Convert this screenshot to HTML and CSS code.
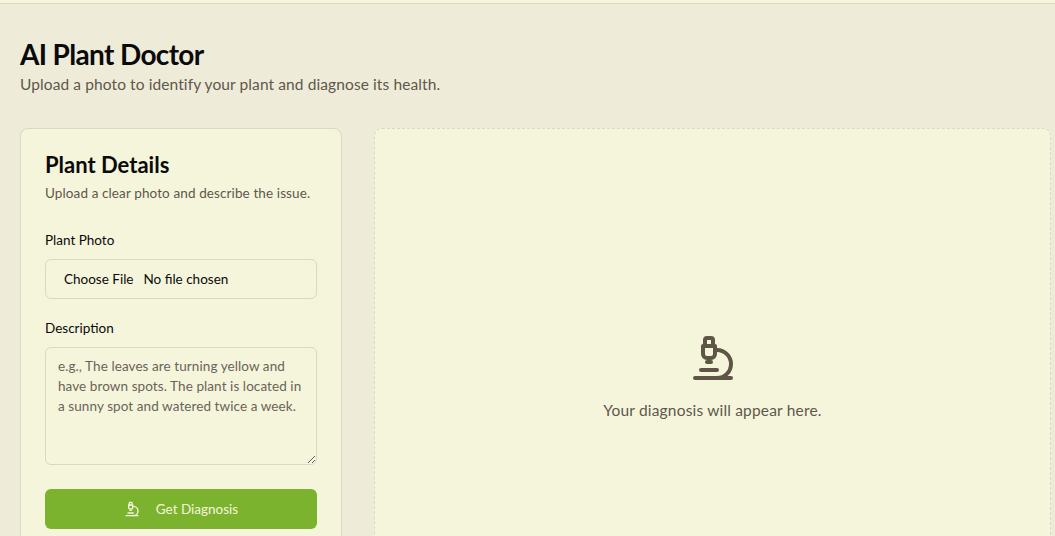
FILE: index.html
```html
<!DOCTYPE html>
<html lang="en">
<head>
<meta charset="utf-8">
<title>AI Plant Doctor</title>
<link rel="stylesheet" href="styles.css">
</head>
<body>
<div class="topbar"></div>
<main class="page">
  <header class="header">
    <h1 class="title">AI Plant Doctor</h1>
    <p class="subtitle">Upload a photo to identify your plant and diagnose its health.</p>
  </header>
  <div class="columns">
    <section class="card">
      <h2 class="card-title">Plant Details</h2>
      <p class="card-sub">Upload a clear photo and describe the issue.</p>
      <div class="field">
        <label class="label">Plant Photo</label>
        <div class="file-input"><span class="file-btn">Choose File</span><span>No file chosen</span></div>
      </div>
      <div class="field">
        <label class="label">Description</label>
        <textarea class="textarea" placeholder="e.g., The leaves are turning yellow and have brown spots. The plant is located in a sunny spot and watered twice a week."></textarea>
      </div>
      <button class="submit" type="button">
        <svg class="icon-small" viewBox="0 0 24 24" fill="none" stroke="currentColor" stroke-width="2" stroke-linecap="round" stroke-linejoin="round"><path d="M6 18h8"/><path d="M3 22h18"/><path d="M14 22a7 7 0 1 0 0-14h-1"/><path d="M9 14h2"/><path d="M9 12a2 2 0 0 1-2-2V6h6v4a2 2 0 0 1-2 2Z"/><path d="M12 6V3a1 1 0 0 0-1-1H9a1 1 0 0 0-1 1v3"/></svg>
        <span>Get Diagnosis</span>
      </button>
    </section>
    <section class="result">
      <svg class="icon-large" viewBox="0 0 24 24" fill="none" stroke="currentColor" stroke-width="2" stroke-linecap="round" stroke-linejoin="round"><path d="M6 18h8"/><path d="M3 22h18"/><path d="M14 22a7 7 0 1 0 0-14h-1"/><path d="M9 14h2"/><path d="M9 12a2 2 0 0 1-2-2V6h6v4a2 2 0 0 1-2 2Z"/><path d="M12 6V3a1 1 0 0 0-1-1H9a1 1 0 0 0-1 1v3"/></svg>
      <p class="result-text">Your diagnosis will appear here.</p>
    </section>
  </div>
</main>
</body>
</html>
```
FILE: styles.css
```css
* { box-sizing: border-box; }
html, body { margin: 0; height: 536px; overflow: hidden; }
body {
  background: #eeecd9;
  color: #0a0a0a;
  font-family: "Lato", "Noto Sans", sans-serif;
}
.topbar {
  height: 4px;
  background: #f5f5dc;
  border-bottom: 1px solid #dad8c0;
}
.page { padding: 32px 4px 0 20px; }
.header { margin-bottom: 32px; }
.title {
  margin: 0;
  font-size: 28px;
  line-height: 36px;
  font-weight: 700;
  letter-spacing: -0.65px;
}
.subtitle {
  margin: 0;
  font-size: 15.5px;
  line-height: 24px;
  letter-spacing: 0.1px;
  color: #5f574c;
}
.columns {
  display: grid;
  grid-template-columns: 322px 1fr;
  gap: 32px;
  align-items: start;
}
.card {
  height: 460px;
  padding: 23px 24px 24px;
  background: #f5f5dc;
  border: 1px solid #dad8c0;
  border-radius: 8px;
}
.card-title {
  margin: 0;
  font-size: 22px;
  line-height: 26px;
  font-weight: 700;
  letter-spacing: 0;
}
.card-sub {
  margin: 5px 0 0;
  font-size: 13.5px;
  line-height: 20px;
  letter-spacing: 0.11px;
  color: #5f574c;
}
.field { margin-top: 27px; }
.field + .field { margin-top: 19px; }
.label {
  display: block;
  font-size: 13.5px;
  line-height: 20px;
}
.file-input {
  display: flex;
  align-items: center;
  gap: 10px;
  height: 40px;
  margin-top: 9px;
  padding: 0 18px;
  font-size: 13.5px;
  border: 1px solid #dad8c0;
  border-radius: 6px;
}
.textarea {
  display: block;
  width: 100%;
  height: 118px;
  margin-top: 9px;
  padding: 8px 12px;
  font: 13.5px/20px "Lato", "Noto Sans", sans-serif;
  letter-spacing: 0.08px;
  color: #0a0a0a;
  background: transparent;
  border: 1px solid #dad8c0;
  border-radius: 6px;
  outline: none;
  resize: vertical;
}
.textarea::placeholder { color: #6b6358; opacity: 1; }
.submit {
  display: flex;
  align-items: center;
  justify-content: center;
  gap: 16px;
  width: 100%;
  height: 40px;
  margin-top: 24px;
  font: 13.5px "Lato", "Noto Sans", sans-serif;
  color: #f5f5dc;
  background: #7cb32e;
  border: 0;
  border-radius: 6px;
}
.icon-small { width: 16px; height: 16px; }
.result {
  display: flex;
  flex-direction: column;
  align-items: center;
  height: 460px;
  padding-top: 205px;
  background: #f5f5dc;
  border: 1px dashed #dad8c0;
  border-radius: 8px;
}
.icon-large { width: 48px; height: 48px; color: #5f5547; }
.result-text {
  margin: 16px 0 0;
  font-size: 15.5px;
  line-height: 24px;
  letter-spacing: 0.18px;
  color: #5f574c;
}
```
